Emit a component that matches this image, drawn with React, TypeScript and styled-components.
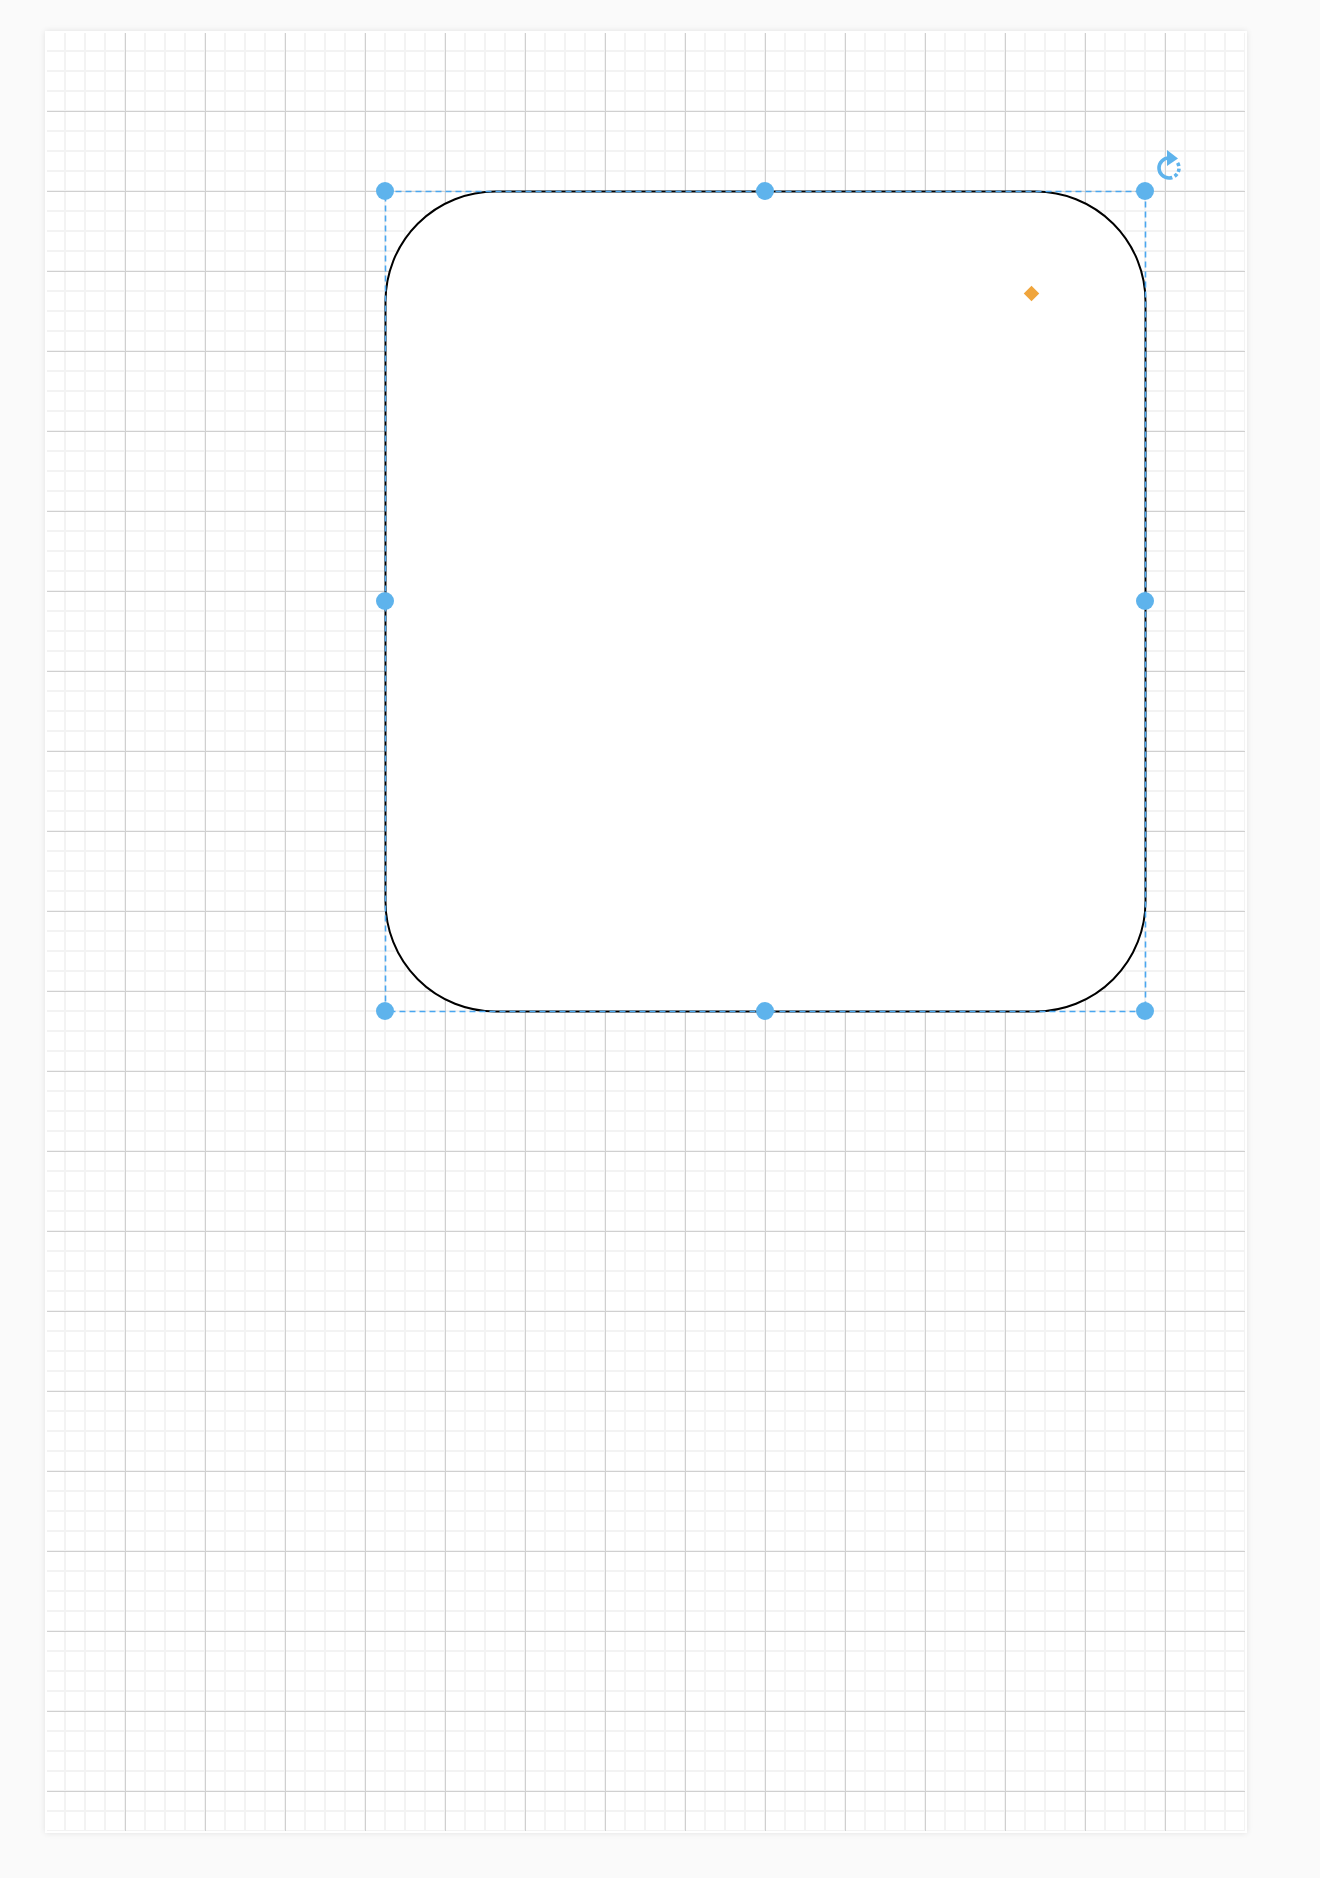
import React, { FC } from 'react'
import styled, { createGlobalStyle } from 'styled-components'

const GlobalStyle = createGlobalStyle`
  html, body {
    margin: 0;
    padding: 0;
    background: #fafafa;
    font-family: 'Liberation Sans', Arial, sans-serif;
  }
`

const Workspace = styled.div`
  min-height: 1878px;
  padding: 31px 0 0 45px;
  box-sizing: border-box;
`

const Page = styled.div`
  position: relative;
  width: 1202px;
  height: 1802px;
  padding: 2px;
  box-sizing: border-box;
  background: #fff;
  box-shadow: 0 0 6px rgba(0, 0, 0, 0.1);
`

const Grid = styled.div`
  width: 100%;
  height: 100%;
  background-image: linear-gradient(to right, #d0d0d0 1px, transparent 1px),
    linear-gradient(to bottom, #d0d0d0 1px, transparent 1px),
    linear-gradient(
      to right,
      #f3f3f3 1px,
      transparent 1px,
      transparent 19px,
      #f3f3f3 19px
    ),
    linear-gradient(
      to bottom,
      #f3f3f3 1px,
      transparent 1px,
      transparent 19px,
      #f3f3f3 19px
    );
  background-size: 80px 80px, 80px 80px, 20px 20px, 20px 20px;
  background-position: -2px -2px;
`

// nodes on the diagram canvas sit at their own coordinates
const Layer = styled.svg<{ $x: number; $y: number }>`
  position: absolute;
  left: ${(p) => p.$x}px;
  top: ${(p) => p.$y}px;
  overflow: visible;
`

const Handle = styled.div<{ $x: number; $y: number }>`
  position: absolute;
  left: ${(p) => p.$x - 9}px;
  top: ${(p) => p.$y - 9}px;
  width: 18px;
  height: 18px;
  border-radius: 50%;
  background: #5eb3ec;
`

const ArcHandle = styled.div<{ $x: number; $y: number }>`
  position: absolute;
  left: ${(p) => p.$x - 5.5}px;
  top: ${(p) => p.$y - 5.5}px;
  width: 11px;
  height: 11px;
  background: #f0a53c;
  transform: rotate(45deg);
`

const RotateHandle = styled.svg`
  position: absolute;
  left: 1108px;
  top: 116px;
`

type Box = { x: number; y: number; w: number; h: number }

const roundedPath = (w: number, h: number, r: number, o: number) =>
  `M${o + r} ${o} L${o + w - r} ${o} A${r} ${r} 0 0 1 ${o + w} ${o + r} ` +
  `L${o + w} ${o + h - r} A${r} ${r} 0 0 1 ${o + w - r} ${o + h} ` +
  `L${o + r} ${o + h} A${r} ${r} 0 0 1 ${o} ${o + h - r} ` +
  `L${o} ${o + r} A${r} ${r} 0 0 1 ${o + r} ${o} Z`

const RoundedShape: FC<Box> = ({ x, y, w, h }) => (
  <Layer $x={x - 1.5} $y={y - 1.5} width={w + 3} height={h + 3}>
    <path
      d={roundedPath(w, h, 110, 1.5)}
      fill="#fff"
      stroke="#000"
      strokeWidth={2}
    />
  </Layer>
)

const Selection: FC<Box> = ({ x, y, w, h }) => {
  const handles = [
    [x, y],
    [x + w / 2, y],
    [x + w, y],
    [x, y + h / 2],
    [x + w, y + h / 2],
    [x, y + h],
    [x + w / 2, y + h],
    [x + w, y + h],
  ]
  return (
    <>
      <Layer $x={x - 1.5} $y={y - 1.5} width={w + 3} height={h + 3}>
        <rect
          x={1.5}
          y={1.5}
          width={w}
          height={h}
          fill="none"
          stroke="#4aa7f0"
          strokeWidth={1.6}
          strokeDasharray="6 4"
        />
      </Layer>
      {handles.map(([hx, hy], i) => (
        <Handle key={i} $x={hx} $y={hy} />
      ))}
      <ArcHandle $x={986} $y={262} />
      <RotateHandle width={34} height={38} viewBox="0 0 34 38">
        <path
          d="M16 11 A10 10 0 0 0 6 21 A10 10 0 0 0 16 31"
          fill="none"
          stroke="#5eb3ec"
          strokeWidth={3.6}
        />
        <path
          d="M16 31 A10 10 0 0 0 23.7 14.6"
          fill="none"
          stroke="#5eb3ec"
          strokeWidth={3.6}
          strokeDasharray="3.4 2.4"
        />
        <polygon points="14,3 25,11.5 14,19" fill="#5eb3ec" />
      </RotateHandle>
    </>
  )
}

export default function App() {
  const shape = { x: 340, y: 160, w: 760, h: 820 }
  return (
    <>
      <GlobalStyle />
      <Workspace>
        <Page>
          <Grid />
          <RoundedShape {...shape} />
          <Selection {...shape} />
        </Page>
      </Workspace>
    </>
  )
}
